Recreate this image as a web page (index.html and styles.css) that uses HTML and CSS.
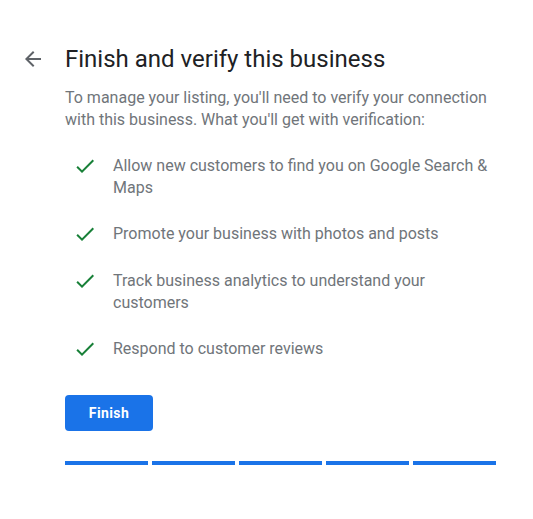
FILE: index.html
```html
<!DOCTYPE html>
<html>
<head>
<meta charset="utf-8">
<link rel="stylesheet" href="styles.css">
</head>
<body>
<div class="page">
  <div class="header">
    <svg class="back" viewBox="0 0 24 24" width="24" height="24"><path d="M20 11H7.83l5.59-5.59L12 4l-8 8 8 8 1.41-1.41L7.83 13H20v-2z" fill="#5f6368"/></svg>
    <h1 class="title">Finish and verify this business</h1>
  </div>
  <div class="content">
    <p class="desc">To manage your listing, you'll need to verify your connection with this business. What you'll get with verification:</p>
    <ul class="list">
      <li class="item"><svg class="check" viewBox="0 0 24 24" width="24" height="24"><path d="M9 16.17L4.83 12l-1.42 1.41L9 19 21 7l-1.41-1.41z" fill="#188038"/></svg><span>Allow new customers to find you on Google Search &amp; Maps</span></li>
      <li class="item"><svg class="check" viewBox="0 0 24 24" width="24" height="24"><path d="M9 16.17L4.83 12l-1.42 1.41L9 19 21 7l-1.41-1.41z" fill="#188038"/></svg><span>Promote your business with photos and posts</span></li>
      <li class="item"><svg class="check" viewBox="0 0 24 24" width="24" height="24"><path d="M9 16.17L4.83 12l-1.42 1.41L9 19 21 7l-1.41-1.41z" fill="#188038"/></svg><span>Track business analytics to understand your customers</span></li>
      <li class="item"><svg class="check" viewBox="0 0 24 24" width="24" height="24"><path d="M9 16.17L4.83 12l-1.42 1.41L9 19 21 7l-1.41-1.41z" fill="#188038"/></svg><span>Respond to customer reviews</span></li>
    </ul>
    <button class="btn">Finish</button>
    <div class="progress">
      <div class="seg"></div><div class="seg"></div><div class="seg"></div><div class="seg"></div><div class="seg"></div>
    </div>
  </div>
</div>
</body>
</html>
```
FILE: styles.css
```css
html, body { margin: 0; padding: 0; background: #fff; }
body { font-family: Roboto, "Liberation Sans", sans-serif; }
.page { padding: 45px 0 0 21px; }
.header { display: flex; align-items: center; gap: 20px; height: 28px; }
.back { display: block; flex: none; }
.title { margin: 0; font-family: Roboto, sans-serif; font-weight: 400; font-size: 24px; line-height: 28px; color: #202124; }
.content { margin-left: 44px; width: 431px; }
.desc { margin: 14px 0 0; font-size: 16px; line-height: 22px; color: #70757a; }
.list { list-style: none; margin: 12px 0 0; padding: 0; }
.item { display: flex; align-items: flex-start; gap: 16px; padding: 12px 0; font-size: 16px; line-height: 22px; color: #70757a; }
.check { flex: none; display: block; margin-left: 8px; margin-top: -1px; }
.btn { display: block; margin-top: 22px; width: 88px; height: 36px; border: none; border-radius: 4px; background: #1a73e8; color: #fff; font-family: Roboto, sans-serif; font-size: 14px; font-weight: 700; letter-spacing: 0.4px; padding: 0; }
.progress { display: flex; gap: 4px; margin-top: 30px; }
.seg { width: 83px; height: 4px; background: #1a73e8; }
```
